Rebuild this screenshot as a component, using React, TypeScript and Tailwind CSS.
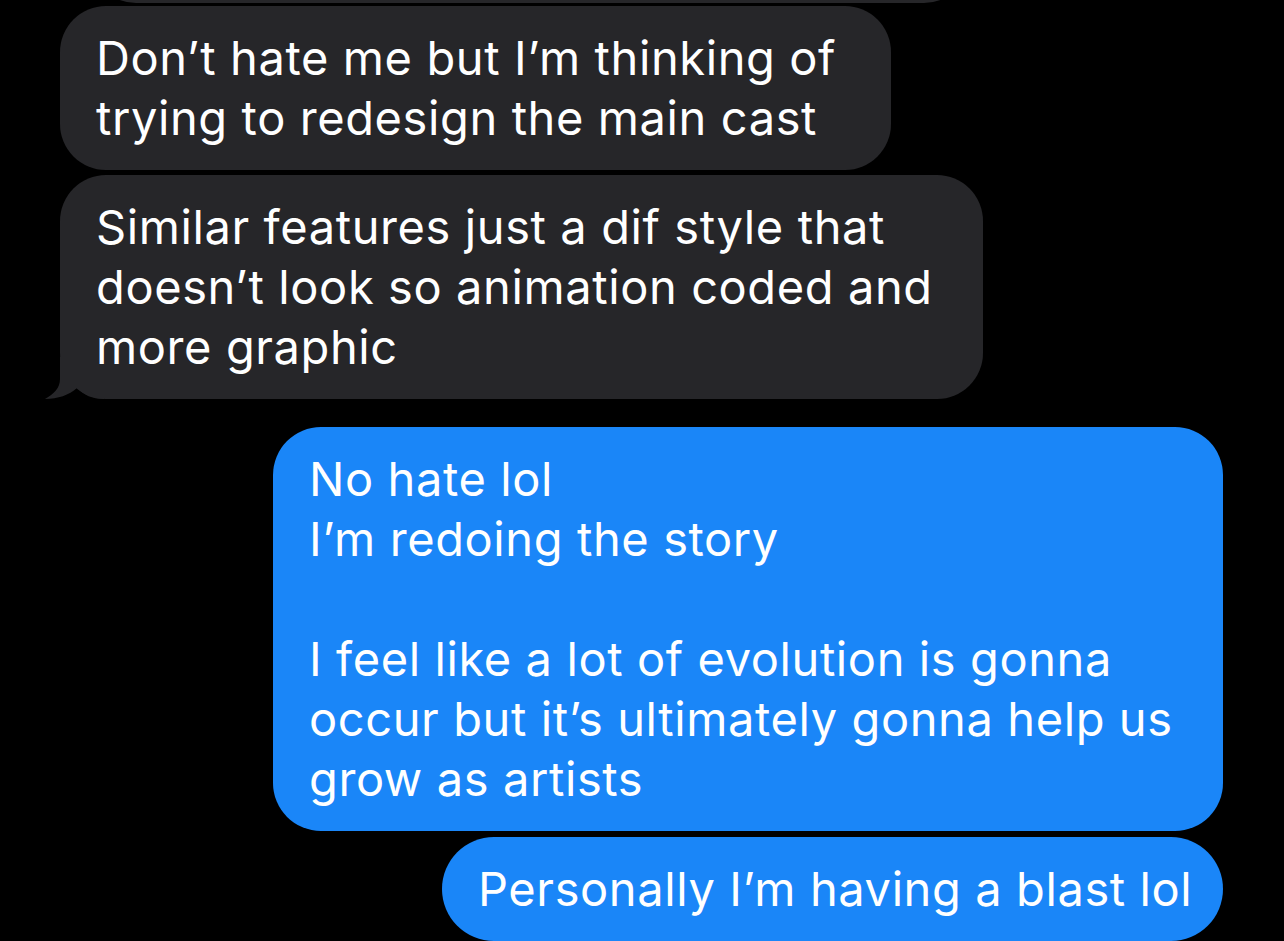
import React from "react";

const font = { fontFamily: "Inter, 'Noto Sans', sans-serif" };

function Lines({ lines }: { lines: string[] }) {
  return (
    <>
      {lines.map((l, i) => (
        <div key={i} className="h-[60px] leading-[60px] whitespace-nowrap">
          {l === "" ? "\u00a0" : l}
        </div>
      ))}
    </>
  );
}

export default function App() {
  return (
    <div
      className="w-[1284px] h-[941px] bg-black overflow-hidden text-white text-[47px] tracking-[0.6px]"
      style={font}
    >
      <div className="flex flex-col pl-[60px] pr-[61px]">
        {/* previous bubble sliver */}
        <div className="mt-[-97px] ml-[30px] w-[880px] h-[100px] rounded-[46px] bg-[#262629]" />

        <div className="mt-[3px] w-[831px] rounded-[46px] bg-[#262629] pl-[36px] pr-[38px] py-[22px]">
          <Lines lines={["Don’t hate me but I’m thinking of", "trying to redesign the main cast"]} />
        </div>

        <div className="relative mt-[5px] w-[923px] rounded-[46px] bg-[#262629] pl-[36px] pr-[38px] py-[22px]">
          <svg
            className="absolute left-[-20px] bottom-0"
            width="64"
            height="42"
            viewBox="0 0 64 42"
          >
            <path
              d="M20 0 L20 22 C20 31 14 37 5 42 C18 42 29 38 37 31 C44 38 52 42 64 42 L64 0 Z"
              fill="#262629"
            />
          </svg>
          <div className="relative">
            <Lines
              lines={[
                "Similar features just a dif style that",
                "doesn’t look so animation coded and",
                "more graphic",
              ]}
            />
          </div>
        </div>

        <div className="self-end mt-[28px] w-[950px] rounded-[48px] bg-[#1a86f8] pl-[36px] pr-[38px] py-[22px]">
          <Lines
            lines={[
              "No hate lol",
              "I’m redoing the story",
              "",
              "I feel like a lot of evolution is gonna",
              "occur but it’s ultimately gonna help us",
              "grow as artists",
            ]}
          />
        </div>

        <div className="self-end mt-[6px] w-[781px] rounded-[52px] bg-[#1a86f8] pl-[36px] pr-[38px] py-[22px]">
          <Lines lines={["Personally I’m having a blast lol"]} />
        </div>
      </div>
    </div>
  );
}
